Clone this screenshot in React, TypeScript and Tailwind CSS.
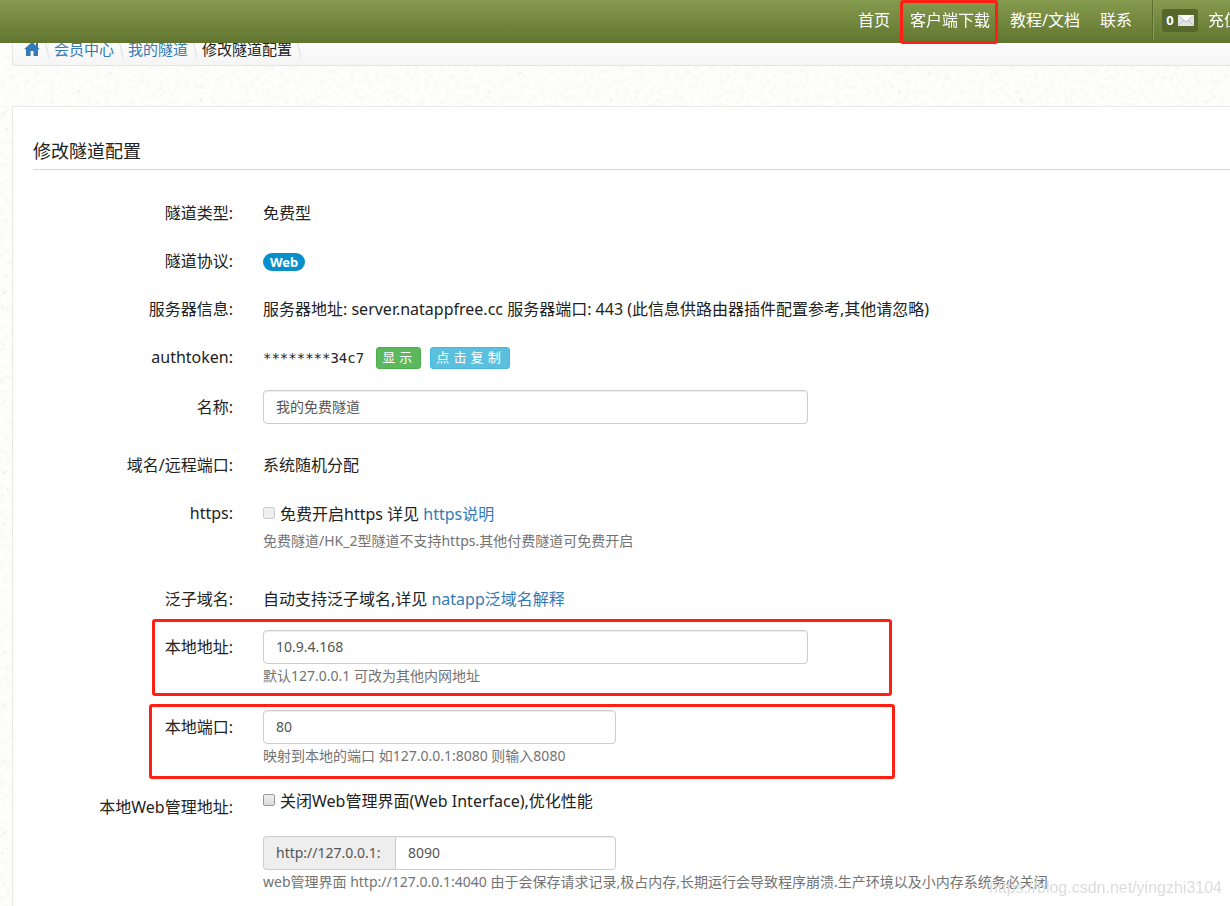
import React from "react";

const linkClass = "text-[#337ab7] hover:underline";
const inputClass =
  "block h-[34px] w-full border border-[#ccc] bg-white px-3 pb-0.5 text-sm leading-5 text-[#555] shadow-[inset_0_1px_1px_rgba(0,0,0,0.075)] outline-none focus:border-[#66afe9]";

function PaperTexture() {
  return (
    <svg className="pointer-events-none absolute inset-0 h-full w-full" aria-hidden="true">
      <filter id="grain" x="0" y="0" width="100%" height="100%">
        <feTurbulence type="fractalNoise" baseFrequency="0.2" numOctaves="4" seed="8" />
        <feColorMatrix values="0 0 0 0 0.45  0 0 0 0 0.45  0 0 0 0 0.42  0.6 0 0 0 -0.24" />
      </filter>
      <pattern id="fibres" width="410" height="180" patternUnits="userSpaceOnUse">
        <g fill="none" stroke="#8a8a86" strokeWidth="1" opacity="0.2">
          <path d="M2 114l5-3M79 90l1 3M160 88h2M108 76l3-4M200 98l2 4M250 101h2M387 101h2M310 104h2M24 87h1M3 164l2 1M7 128l1 2M4 40l1 2" />
        </g>
      </pattern>
      <rect width="100%" height="100%" filter="url(#grain)" opacity="0.35" />
      <rect width="100%" height="100%" fill="url(#fibres)" />
    </svg>
  );
}

function Row({
  label,
  htmlFor,
  className = "",
  children,
}: {
  label: string;
  htmlFor?: string;
  className?: string;
  children: React.ReactNode;
}) {
  const labelClass = "pt-3 text-right leading-6 whitespace-nowrap";
  return (
    <div className={`relative grid grid-cols-[200px_minmax(0,1fr)] gap-x-[30px] ${className}`}>
      {htmlFor ? (
        <label htmlFor={htmlFor} className={labelClass}>
          {label}
        </label>
      ) : (
        <div className={labelClass}>{label}</div>
      )}
      <div className="whitespace-nowrap">{children}</div>
    </div>
  );
}

function Help({ id, children }: { id: string; children: React.ReactNode }) {
  return (
    <p id={id} className="mt-0.5 text-sm leading-5 text-[#737373]">
      {children}
    </p>
  );
}

function Checkbox({ id, disabled }: { id: string; disabled?: boolean }) {
  return (
    <input
      id={id}
      type="checkbox"
      disabled={disabled}
      className="mr-[5px] mb-0.5 h-3 w-3 shrink-0 appearance-none rounded-[2px] border border-[#999] bg-linear-to-b from-[#efefef] to-[#dcdcdc] checked:bg-[#337ab7] disabled:border-[#ccc] disabled:to-[#eee]"
    />
  );
}

function Crumb({ children }: { children: React.ReactNode }) {
  return (
    <li className="flex items-center">
      {children}
      <svg className="mx-1 h-5 w-1.5" viewBox="0 0 6 20" aria-hidden="true">
        <path d="M1 1 5 19" stroke="#ddd" strokeWidth="1" />
      </svg>
    </li>
  );
}

function Header() {
  const item = "flex h-full items-center px-[10px] leading-6 text-white";
  return (
    <header className="fixed inset-x-0 top-0 z-20 h-[43px] bg-linear-to-b from-[#859b4e] to-[#61752f]">
      <nav className="flex h-full justify-end pb-1 whitespace-nowrap" aria-label="主导航">
        <a href="#home" className={item}>
          首页
        </a>
        <div className="relative">
          <a href="#download" className={item}>
            客户端下载
          </a>
          <span className="pointer-events-none absolute top-0 right-0.5 left-0 h-11 rounded-[3px] border-[3px] border-[#ff2014]" />
        </div>
        <a href="#docs" className={item}>
          教程/文档
        </a>
        <a href="#contact" className={item}>
          联系
        </a>
        <span className="mr-2 ml-[10px] h-10 w-0.5 border-r border-l border-r-[#8ba056] border-l-[#586b2c]" />
        <a
          href="#messages"
          className="mt-[9px] flex h-[23px] w-9 items-center justify-center gap-1 rounded-[3px] bg-[#56672b] text-[13px] font-bold text-white"
        >
          0
          <svg className="h-[11px] w-4" viewBox="0 0 16 11" aria-hidden="true">
            <rect width="16" height="11" fill="#e3e3e3" />
            <path d="M0 0h16L8 7Z" fill="#f8f8f8" />
            <path d="m1 1 7 6 7-6M1 10l5-5m9 5-5-5" fill="none" stroke="#b5b5b5" strokeWidth="0.8" />
          </svg>
        </a>
        <a href="#recharge" className={`${item} -mr-5`}>
          充值
        </a>
      </nav>
    </header>
  );
}

export default function App() {
  return (
    <div className="relative min-h-screen overflow-hidden bg-[#fefefd] font-['Noto_Sans','Noto_Sans_CJK_SC',sans-serif] text-base text-[#222]">
      <PaperTexture />
      <Header />

      <div className="relative pt-8 pl-3">
        <ol className="flex h-[34px] items-center rounded-bl-[4px] border border-r-0 border-[#e5e5e5] bg-linear-to-b from-white to-[#f5f5f5] pb-px pl-[11px] text-[15px] leading-5 whitespace-nowrap">
          <Crumb>
            <a href="#home" aria-label="首页" className="text-[#337ab7]">
              <svg className="h-3.5 w-4" viewBox="0 0 16 14" fill="currentColor" aria-hidden="true">
                <path d="M8 0 0 7.2h2V14h4.6V9h2.9v5H14V7.2h2L14 5.4V1h-2v2.6Z" />
              </svg>
            </a>
          </Crumb>
          <Crumb>
            <a href="#member" className={linkClass}>
              会员中心
            </a>
          </Crumb>
          <Crumb>
            <a href="#tunnels" className={linkClass}>
              我的隧道
            </a>
          </Crumb>
          <Crumb>修改隧道配置</Crumb>
        </ol>

        <main className="-mb-6 mt-10 border border-r-0 border-[#e8e8e8] bg-white pb-10 pl-5">
          <h1 className="border-b border-[#d5d5d5] pt-[31px] pb-1 text-lg leading-[27px]">修改隧道配置</h1>

          <form className="pt-[19px]" onSubmit={(e) => e.preventDefault()}>
            <Row label="隧道类型:">
              <p className="py-3 leading-6">免费型</p>
            </Row>
            <Row label="隧道协议:">
              <div className="flex h-12 items-center">
                <span className="mt-px rounded-full bg-[#078fcb] px-[7px] text-[13px] leading-[18px] font-bold text-white">
                  Web
                </span>
              </div>
            </Row>
            <Row label="服务器信息:">
              <p className="py-3 leading-6">
                服务器地址: server.natappfree.cc 服务器端口: 443 (此信息供路由器插件配置参考,其他请忽略)
              </p>
            </Row>
            <Row label="authtoken:">
              <div className="flex h-12 items-center pt-0.5 font-['DejaVu_Sans','Noto_Sans_CJK_SC',sans-serif]">
                <code className="mr-3 font-['DejaVu_Sans_Mono',monospace] text-sm leading-5">********34c7</code>
                <button
                  type="button"
                  className="mr-[9px] h-[22px] rounded-[3px] border border-[#4cae4c] bg-[#5cb85c] px-[5px] pr-2 text-[13px] leading-5 text-white"
                >
                  显 示
                </button>
                <button
                  type="button"
                  className="h-[22px] rounded-[3px] border border-[#46b8da] bg-[#5bc0de] px-[5px] pr-2 text-[13px] leading-5 text-white"
                >
                  点 击 复 制
                </button>
              </div>
            </Row>
            <Row label="名称:" htmlFor="name" className="pt-0.5">
              <div className="max-w-[545px] pt-[7px] pb-[17px]">
                <input id="name" type="text" defaultValue="我的免费隧道" className={`${inputClass} rounded-[4px]`} />
              </div>
            </Row>
            <Row label="域名/远程端口:">
              <p className="py-3 leading-6">系统随机分配</p>
            </Row>
            <Row label="https:" htmlFor="https">
              <div className="pt-[13px] pb-6">
                <div className="mb-[5px] flex items-center leading-6">
                  <Checkbox id="https" disabled />
                  <label htmlFor="https">免费开启https 详见&nbsp;</label>
                  <a href="#https" className={linkClass}>
                    https说明
                  </a>
                </div>
                <p className="text-sm leading-5 text-[#737373]">
                  免费隧道/HK_2型隧道不支持https.其他付费隧道可免费开启
                </p>
              </div>
            </Row>
            <Row label="泛子域名:">
              <p className="py-3 leading-6">
                自动支持泛子域名,详见{" "}
                <a href="#wildcard" className={linkClass}>
                  natapp泛域名解释
                </a>
              </p>
            </Row>
            <Row label="本地地址:" htmlFor="address">
              <div className="max-w-[545px] pt-[7px] pb-[17px]">
                <input
                  id="address"
                  type="text"
                  defaultValue="10.9.4.168"
                  aria-describedby="address-help"
                  className={`${inputClass} rounded-[4px]`}
                />
                <Help id="address-help">默认127.0.0.1 可改为其他内网地址</Help>
              </div>
              <span className="pointer-events-none absolute -top-1 left-[119px] h-[77px] w-[740px] rounded-[3px] border-[3px] border-[#ff2014]" />
            </Row>
            <Row label="本地端口:" htmlFor="port">
              <div className="max-w-[353px] pt-[7px] pb-[17px]">
                <input
                  id="port"
                  type="text"
                  defaultValue="80"
                  aria-describedby="port-help"
                  className={`${inputClass} rounded-[4px]`}
                />
                <Help id="port-help">映射到本地的端口 如127.0.0.1:8080 则输入8080</Help>
              </div>
              <span className="pointer-events-none absolute top-px left-[116px] h-[75px] w-[746px] rounded-[3px] border-[3px] border-[#ff2014]" />
            </Row>
            <Row label="本地Web管理地址:" htmlFor="web-port">
              <div className="pt-1.5">
                <div className="mb-[23px] flex items-center leading-6">
                  <Checkbox id="web-off" />
                  <label htmlFor="web-off">关闭Web管理界面(Web Interface),优化性能</label>
                </div>
                <div className="flex max-w-[353px]">
                  <span className="w-[132px] shrink-0 rounded-l-[4px] border border-r-0 border-[#ccc] bg-[#eee] pt-1.5 pl-3 text-sm leading-5 text-[#555]">
                    http://127.0.0.1:
                  </span>
                  <input
                    id="web-port"
                    type="text"
                    defaultValue="8090"
                    aria-describedby="web-help"
                    className={`${inputClass} rounded-r-[4px]`}
                  />
                </div>
                <Help id="web-help">
                  web管理界面 http://127.0.0.1:4040 由于会保存请求记录,极占内存,长期运行会导致程序崩溃.生产环境以及小内存系统务必关闭
                </Help>
              </div>
            </Row>
          </form>
        </main>
      </div>

      <span className="pointer-events-none fixed right-2 bottom-2 font-['Liberation_Sans',sans-serif] text-base leading-5 text-[#dcdcdc]">
        https://blog.csdn.net/yingzhi3104
      </span>
    </div>
  );
}
